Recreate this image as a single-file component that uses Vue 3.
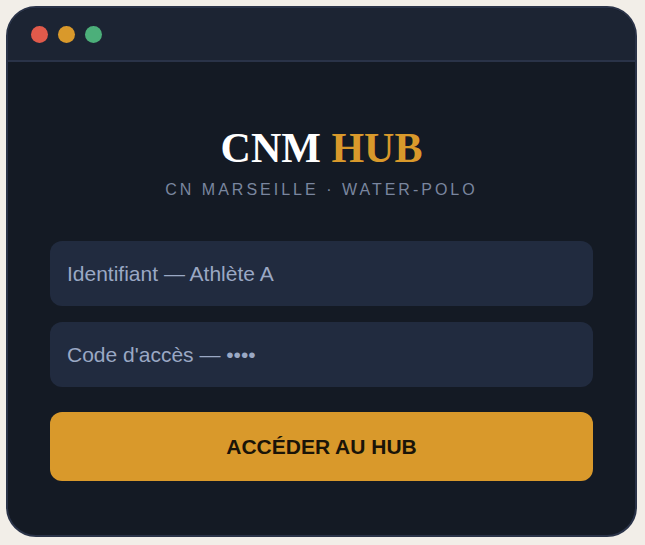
<script setup>
import { ref } from 'vue'

const identifier = ref('')
const code = ref('')
</script>

<template>
  <main class="page">
    <section class="window">
      <header class="titlebar">
        <span class="dot red"></span>
        <span class="dot amber"></span>
        <span class="dot green"></span>
      </header>
      <form class="login" @submit.prevent>
        <h1 class="title">CNM <span class="accent">HUB</span></h1>
        <p class="subtitle">CN MARSEILLE · WATER-POLO</p>
        <div class="fields">
          <input v-model="identifier" class="field" type="text" aria-label="Identifiant" placeholder="Identifiant — Athlète A" />
          <input v-model="code" class="field" type="password" aria-label="Code d'accès" placeholder="Code d'accès — ••••" />
        </div>
        <button class="submit" type="submit">ACCÉDER AU HUB</button>
      </form>
    </section>
  </main>
</template>

<style>
body {
  background: #f2eee8;
}
</style>

<style scoped>
.page {
  box-sizing: border-box;
  min-height: 100vh;
  padding: 6px 8px 8px 6px;
  display: flex;
  background: #f2eee8;
  font-family: "Liberation Sans", Arial, sans-serif;
}

.window {
  flex: 1;
  display: flex;
  flex-direction: column;
  overflow: hidden;
  border: 2px solid #2a3348;
  border-radius: 30px;
  background: #141a24;
}

.titlebar {
  display: flex;
  align-items: center;
  gap: 10px;
  padding: 18px 23px 17px;
  border-bottom: 2px solid #2a3348;
  background: #1c2433;
}

.dot {
  width: 17px;
  height: 17px;
  border-radius: 50%;
}

.red {
  background: #e05a4b;
}

.amber {
  background: #d9992b;
}

.green {
  background: #4caf7a;
}

.login {
  display: flex;
  flex-direction: column;
  padding: 62px 42px 54px;
}

.title {
  margin: 0;
  font: bold 42px/48px "Liberation Serif", "Times New Roman", serif;
  text-align: center;
  color: #fff;
}

.accent {
  color: #d9992b;
}

.subtitle {
  margin: 8px 0 0;
  font-size: 16px;
  line-height: 20px;
  letter-spacing: 3px;
  text-align: center;
  color: #7a869f;
}

.fields {
  display: flex;
  flex-direction: column;
  gap: 16px;
  margin: 41px 0 25px;
}

.field {
  box-sizing: border-box;
  width: 100%;
  height: 65px;
  padding: 0 17px;
  border: 0;
  border-radius: 12px;
  background: #212b3f;
  color: #9aa8c4;
  font-family: inherit;
  font-size: 21px;
}

.field::placeholder {
  color: #9aa8c4;
  opacity: 1;
}

.submit {
  height: 69px;
  padding: 0 17px;
  border: 0;
  border-radius: 12px;
  background: #d9992b;
  color: #1a1408;
  font-family: inherit;
  font-size: 21px;
  font-weight: bold;
  cursor: pointer;
}
</style>
